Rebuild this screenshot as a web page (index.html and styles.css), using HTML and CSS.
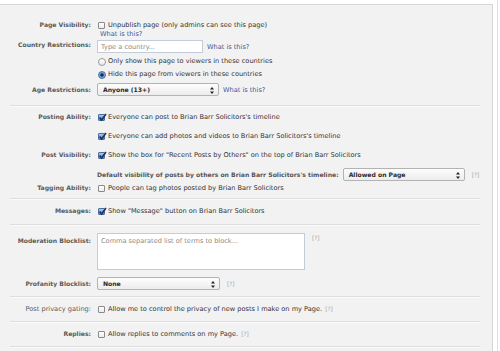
FILE: index.html
```html
<!DOCTYPE html>
<html lang="en">
<head>
  <meta charset="UTF-8" />
  <title>Page Settings</title>
  <link rel="stylesheet" href="styles.css">
</head>
<body>
<div class="frame">
  <div class="panel">

    <!-- visibility / restrictions -->
    <section class="group group-top">
      <div class="row">
        <div class="label">Page Visibility:</div>
        <div class="field">
          <div class="opt"><span class="box"></span>Unpublish page (only admins can see this page)</div>
          <a class="link link-under" href="#">What is this?</a>
        </div>
      </div>

      <div class="row row-country">
        <div class="label">Country Restrictions:</div>
        <div class="field inline">
          <div class="textbox"><span class="ph">Type a country...</span></div>
          <a class="link" href="#">What is this?</a>
        </div>
      </div>

      <div class="row row-radios">
        <div class="label"></div>
        <div class="field">
          <div class="opt radio-line"><span class="radio"></span>Only show this page to viewers in these countries</div>
          <div class="opt radio-line"><span class="radio on"></span>Hide this page from viewers in these countries</div>
        </div>
      </div>

      <div class="row row-age">
        <div class="label">Age Restrictions:</div>
        <div class="field inline">
          <div class="select sel-age">Anyone (13+)<span class="arrows"><svg width="4" height="7" viewBox="0 0 4 7"><path d="M2 0L4 2.6H0z M2 7L4 4.4H0z" fill="#222"/></svg></span></div>
          <a class="link" href="#">What is this?</a>
        </div>
      </div>
    </section>

    <!-- posting -->
    <section class="group group-posting">
      <div class="row">
        <div class="label">Posting Ability:</div>
        <div class="field">
          <div class="opt"><span class="box on"><svg width="9" height="9" viewBox="0 0 9 9"><path d="M1.6 4.6L3.6 7L8 1" fill="none" stroke="#1d2f5e" stroke-width="1.6"/></svg></span>Everyone can post to Brian Barr Solicitors's timeline</div>
          <div class="opt opt-second"><span class="box on"><svg width="9" height="9" viewBox="0 0 9 9"><path d="M1.6 4.6L3.6 7L8 1" fill="none" stroke="#1d2f5e" stroke-width="1.6"/></svg></span>Everyone can add photos and videos to Brian Barr Solicitors's timeline</div>
        </div>
      </div>

      <div class="row row-postvis">
        <div class="label">Post Visibility:</div>
        <div class="field">
          <div class="opt"><span class="box on"><svg width="9" height="9" viewBox="0 0 9 9"><path d="M1.6 4.6L3.6 7L8 1" fill="none" stroke="#1d2f5e" stroke-width="1.6"/></svg></span>Show the box for "Recent Posts by Others" on the top of Brian Barr Solicitors</div>
        </div>
      </div>

      <div class="row row-default">
        <div class="label"></div>
        <div class="field inline">
          <span class="sublabel">Default visibility of posts by others on Brian Barr Solicitors's timeline:</span>
          <div class="select sel-default">Allowed on Page<span class="arrows"><svg width="4" height="7" viewBox="0 0 4 7"><path d="M2 0L4 2.6H0z M2 7L4 4.4H0z" fill="#222"/></svg></span></div>
          <span class="help">[?]</span>
        </div>
      </div>

      <div class="row row-tagging">
        <div class="label">Tagging Ability:</div>
        <div class="field">
          <div class="opt"><span class="box"></span>People can tag photos posted by Brian Barr Solicitors</div>
        </div>
      </div>
    </section>

    <section class="group group-single group-messages">
      <div class="row">
        <div class="label">Messages:</div>
        <div class="field">
          <div class="opt"><span class="box on"><svg width="9" height="9" viewBox="0 0 9 9"><path d="M1.6 4.6L3.6 7L8 1" fill="none" stroke="#1d2f5e" stroke-width="1.6"/></svg></span>Show "Message" button on Brian Barr Solicitors</div>
        </div>
      </div>
    </section>

    <!-- blocklists -->
    <section class="group group-block">
      <div class="row row-mod">
        <div class="label">Moderation Blocklist:</div>
        <div class="field inline top">
          <div class="textarea"><span class="ph">Comma separated list of terms to block...</span></div>
          <span class="help">[?]</span>
        </div>
      </div>

      <div class="row row-prof">
        <div class="label">Profanity Blocklist:</div>
        <div class="field inline">
          <div class="select sel-prof">None<span class="arrows"><svg width="4" height="7" viewBox="0 0 4 7"><path d="M2 0L4 2.6H0z M2 7L4 4.4H0z" fill="#222"/></svg></span></div>
          <span class="help">[?]</span>
        </div>
      </div>
    </section>

    <section class="group group-single">
      <div class="row">
        <div class="label label-plain">Post privacy gating:</div>
        <div class="field">
          <div class="opt"><span class="box"></span>Allow me to control the privacy of new posts I make on my Page.<span class="help">[?]</span></div>
        </div>
      </div>
    </section>

    <section class="group group-single">
      <div class="row">
        <div class="label">Replies:</div>
        <div class="field">
          <div class="opt"><span class="box"></span>Allow replies to comments on my Page.<span class="help">[?]</span></div>
        </div>
      </div>
    </section>

  </div>
</div>
</body>
</html>
```

FILE: styles.css
```css
* { box-sizing: border-box; margin: 0; padding: 0; }
body { background: #fff; font-family: 'DejaVu Sans', sans-serif; font-size: 6.6px; color: #333; }

.frame { width: 498px; height: 351px; border-right: 1px solid #e2e2e2; padding-top: 4px; }
.panel { width: 493px; height: 347px; background: #f2f2f2; border-top: 1px solid #d6d6d6; border-right: 1px solid #d6d6d6; padding: 0 12px 0 10px; overflow: hidden; }

.group { border-bottom: 1px solid #dedede; box-shadow: 0 1px 0 #fafafa; }
.group-top { padding: 15px 0 9px; }
.group-posting { padding: 6px 0 5px; }
.group-single { padding: 7px 0 7px; }
.group-messages { padding-bottom: 8px; }
.group-block { padding: 8px 0 6px; }

.row { display: grid; grid-template-columns: 81px 1fr; column-gap: 6px; align-items: start; line-height: 10px; }
.label { text-align: right; font-weight: bold; font-size: 6.1px; color: #5a5a5a; line-height: 10px; white-space: nowrap; }
.label-plain { font-weight: normal; font-size: 6.6px; }
.field { min-width: 0; }
.inline { display: flex; align-items: center; gap: 4px; }
.inline.top { align-items: flex-start; }

.opt { display: flex; align-items: center; white-space: nowrap; line-height: 10px; }
.opt-second { margin-top: 9px; }
.radio-line { line-height: 13px; }

.link { color: #3b5998; text-decoration: none; white-space: nowrap; }
.link-under { display: block; line-height: 8px; margin-left: 3px; }
.help { color: #a5a5a5; font-size: 5.8px; margin-left: 3px; }

/* checkbox + radio */
.box { width: 7px; height: 7px; border: 1px solid #8a8a8a; border-radius: 1px; background: linear-gradient(#fff, #ececec); margin: 0 3px 0 1px; position: relative; flex: none; }
.box.on { background: linear-gradient(#a9c8ef, #4f8ad6); border-color: #4a6f9f; }
.box svg { position: absolute; left: -1px; top: -2px; }
.radio { width: 8px; height: 8px; border: 1px solid #9a9a9a; border-radius: 50%; background: linear-gradient(#fff, #e8e8e8); margin: 0 2px 0 1px; flex: none; }
.radio.on { background: radial-gradient(circle, #1b2b4f 0 1.4px, #5d93d8 1.8px, #9dc2ee 100%); border-color: #4a6f9f; }

/* inputs */
.textbox { width: 106px; height: 13px; background: #fff; border: 1px solid #c4ccd8; display: flex; align-items: center; padding-left: 3px; }
.textarea { width: 208px; height: 37px; background: #fff; border: 1px solid #c4ccd8; padding: 3px 3px; line-height: 8px; }
.ph { color: #8a8a8a; white-space: nowrap; }

.select { height: 13px; background: linear-gradient(#fdfdfd, #ececec); border: 1px solid #b3b3b3; border-radius: 2px; display: flex; align-items: center; padding-left: 5px; font-weight: bold; font-size: 6.1px; color: #2a2a2a; position: relative; flex: none; }
.arrows { position: absolute; right: 3px; top: 2px; width: 6px; height: 8px; display: flex; align-items: center; justify-content: center; }
.sel-age { width: 122px; }
.sel-prof { width: 123px; }
.sel-default { width: 122px; }

.row-country { margin-top: 2px; }
.row-radios { margin-top: 2px; }
.row-age { margin-top: 2px; align-items: center; }
.row-postvis { margin-top: 9px; }
.row-default { margin-top: 8px; }
.row-tagging { margin-top: 2px; }
.row-prof { margin-top: 7px; align-items: center; }
.row-mod .label { margin-top: 3px; }
.sublabel { font-weight: bold; font-size: 6.1px; color: #555; white-space: nowrap; }
```
